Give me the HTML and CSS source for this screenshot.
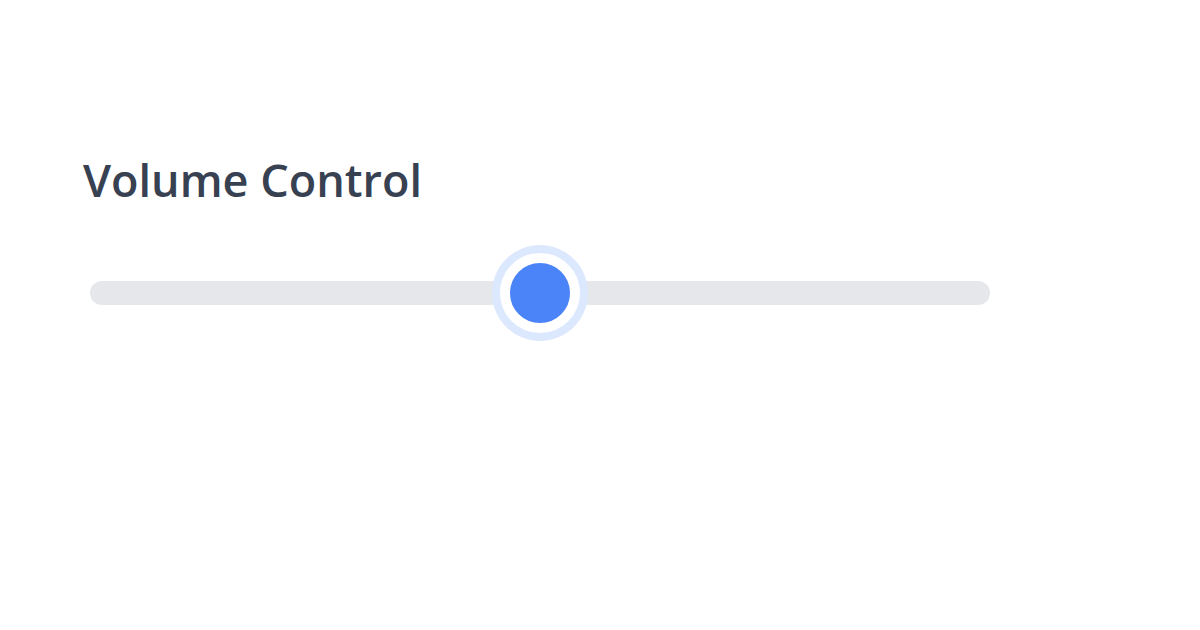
FILE: index.html
```html
<!DOCTYPE html>
<html lang="en">
<head>
    <meta charset="UTF-8">
    <meta name="viewport" content="width=device-width, initial-scale=1.0">
    <title>Volume Control</title>
    <link rel="stylesheet" href="styles.css">
</head>
<body>

<div class="volume-panel">
    <h1>Volume Control</h1>
    <div class="slider-wrap">
        <input type="range" class="volume-slider" id="volume" min="0" max="100" value="50" aria-label="Volume">
    </div>
</div>

</body>
</html>
```

FILE: styles.css
```css
body {
    font-family: "Open Sans", "Noto Sans", sans-serif;
    background: #ffffff;
    margin: 0;
    padding: 0;
}
.volume-panel {
    padding: 148px 82px 0 82px;
}
h1 {
    margin: 0 0 0 1px;
    font-size: 45px;
    font-weight: 600;
    color: #374151;
    line-height: 64px;
}
.slider-wrap {
    width: 900px;
    margin: 33px 0 0 8px;
}
.volume-slider {
    -webkit-appearance: none;
    appearance: none;
    width: 100%;
    height: 96px;
    margin: 0;
    background: transparent;
    outline: none;
}
.volume-slider::-webkit-slider-runnable-track {
    height: 24px;
    background: #e5e7eb;
    border-radius: 12px;
}
.volume-slider::-webkit-slider-thumb {
    -webkit-appearance: none;
    appearance: none;
    width: 80px;
    height: 80px;
    margin-top: -28px;
    border-radius: 50%;
    background: #4a84f8;
    border: 10px solid #ffffff;
    box-sizing: border-box;
    box-shadow: 0 0 0 8px #dce8fe;
    cursor: pointer;
}
```
